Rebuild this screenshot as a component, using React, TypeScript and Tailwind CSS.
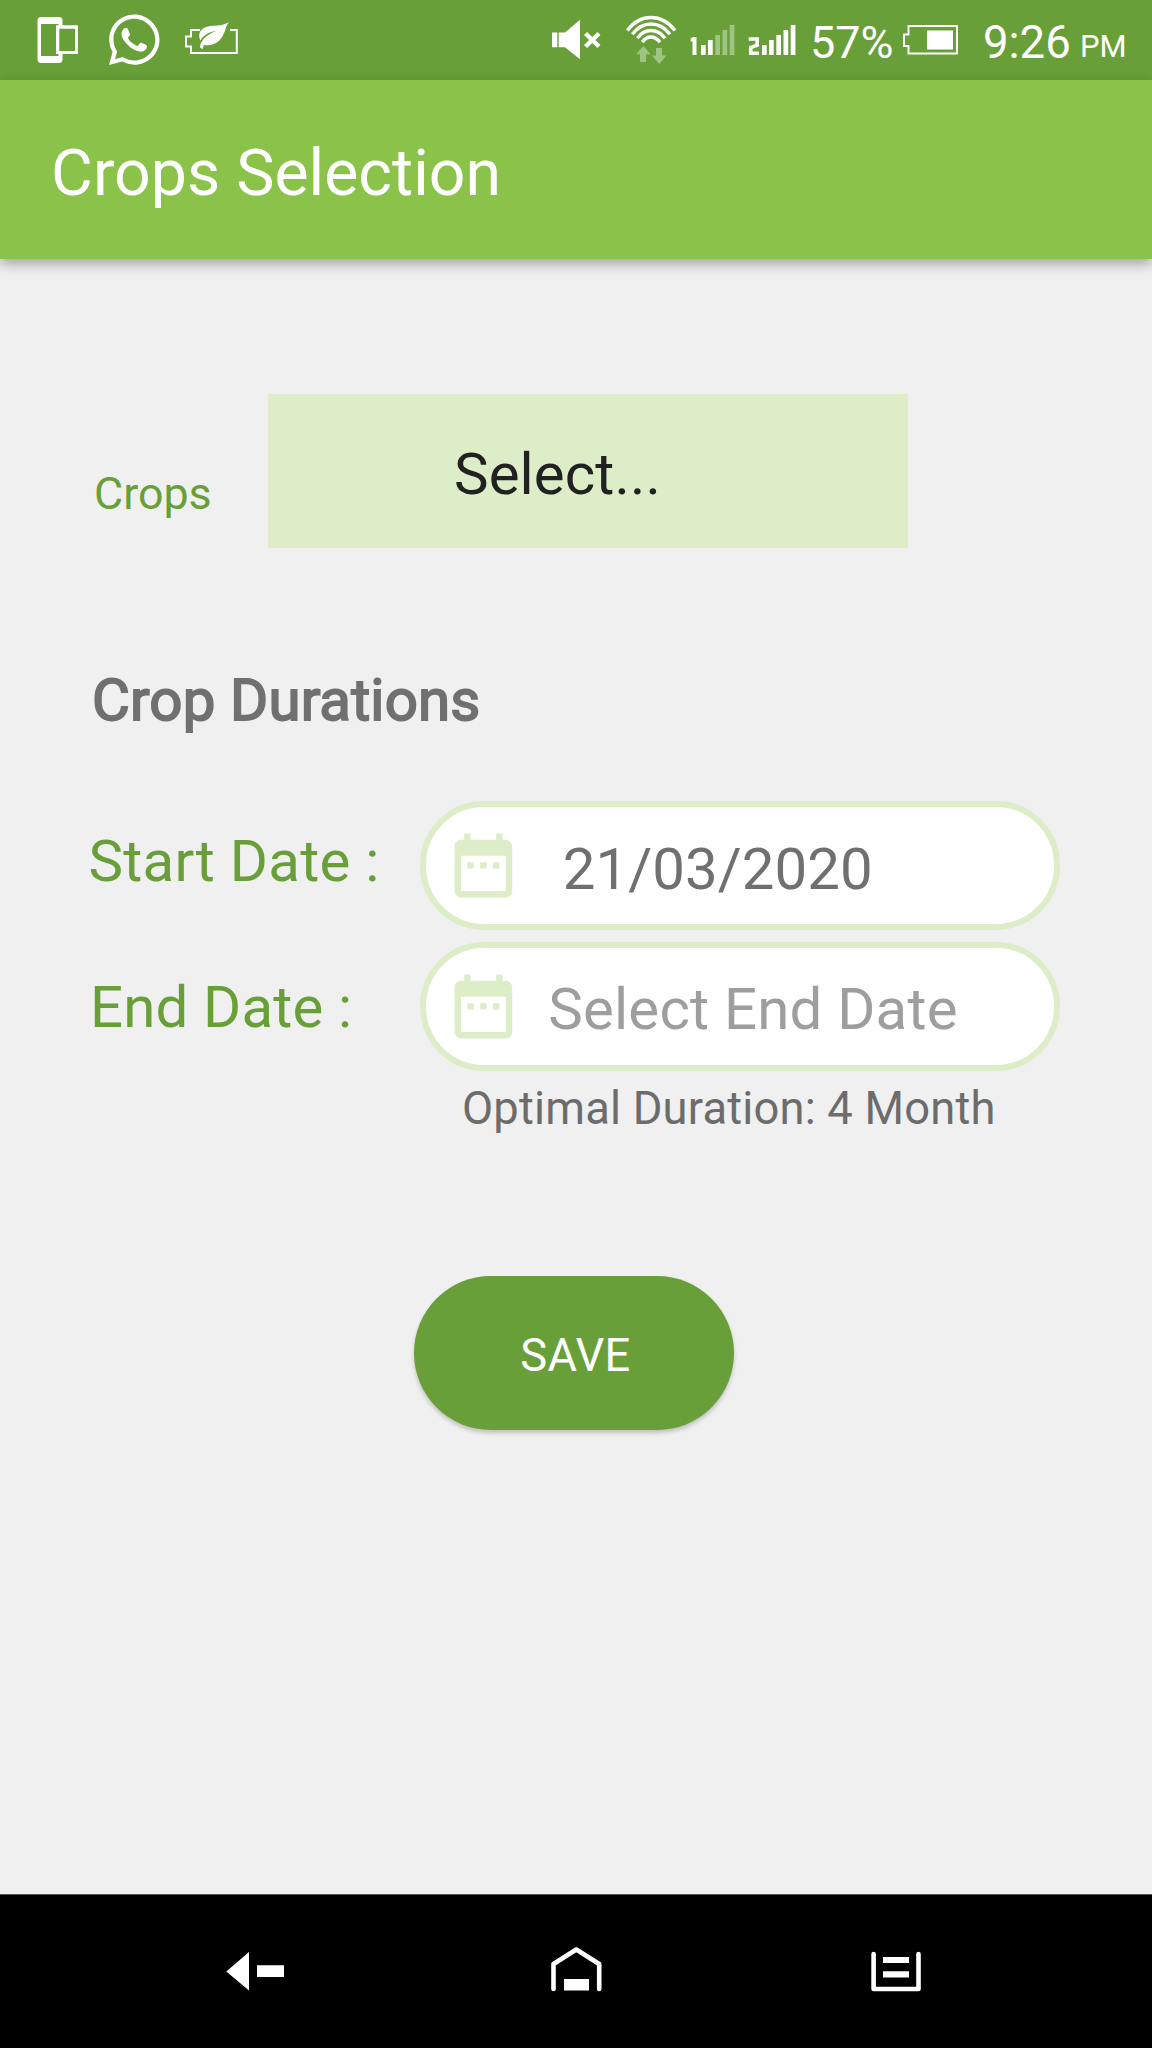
import React from "react";
import { FaWhatsapp } from "react-icons/fa";
import { MdDateRange } from "react-icons/md";

function PhoneIcon() {
  return (
    <svg className="ml-[37px] h-20 w-[42px] shrink-0" viewBox="37 0 42 80">
      <path
        fill="#fff"
        fillRule="evenodd"
        d="M41 17H59Q62.5 17 62.5 20.500V25.300H78V54H62.500V59Q62.500 63 59 63H41Q37.500 63 37.500 59V20.500Q37.500 17 41 17ZM41 24V56H58.500V54H56V25.300H58.500V24ZM59.300 28.700V51H75V28.700Z"
      />
    </svg>
  );
}

function EcoBatteryIcon() {
  return (
    <svg className="ml-[24px] h-20 w-[56px] shrink-0" viewBox="184 0 56 80">
      <path
        fill="none"
        stroke="#fff"
        strokeWidth="2"
        d="M200 30H191V36.500H186V46.500H191V53H236.800V30H230"
      />
      <path
        fill="#fff"
        d="M229 22C225 27 226 31 222 37C218 44 210 46 204 45C203 46.500 202.700 47.500 203 49L200.500 48C199.500 45.500 200.500 43.500 202 41.500C205 36 211 33 217 30.500C209 32 203.500 35 200.500 40.500C198 36 199 30 205 27.500C212 24.500 222 27 229 22Z"
      />
    </svg>
  );
}

function MuteIcon() {
  return (
    <svg className="h-20 w-[50px] shrink-0" viewBox="551 0 50 80">
      <path fill="#fff" d="M552 32.500H557.300V47.300H552ZM558.700 32.500H565L580 19.700V59.300L565 47.300H558.700Z" />
      <path stroke="#fff" strokeWidth="4.400" d="M585.500 33.500L599 46.500M599 33.500L585.500 46.500" />
    </svg>
  );
}

function WifiIcon() {
  return (
    <svg className="ml-[24px] h-20 w-[54px] shrink-0" viewBox="625 0 54 80">
      <g fill="none" stroke="#fff" strokeWidth="3.400">
        <path d="M627.300 30.500Q637 17.500 651 17.500T675 30.500" />
        <path d="M632.300 34.200Q640 24 651 24T670 34.200" />
        <path d="M637.300 38.200Q643 30.500 651 30.500T665 38.200" />
        <path d="M642.300 42.200Q646 37 651 37T660 42.200" />
      </g>
      <path
        fill="#a0c481"
        d="M643.500 46L650.500 54.300H646V62H640V54.300H636ZM656 48H662V55.500H666.500L659.300 64L652 55.500H656Z"
      />
    </svg>
  );
}

const signalBars = [
  [701, 45, 10],
  [708, 40, 15],
  [715.3, 35, 20],
  [722.5, 30, 25],
  [729.7, 25, 30],
];

function SignalOneIcon() {
  return (
    <svg className="ml-[11px] h-20 w-[45px] shrink-0" viewBox="690 0 45 80">
      <path fill="#fff" d="M690.700 38.300L693.300 37H696.500V55H692.500V41.500H690.700Z" />
      {signalBars.map(([x, y, h], i) => (
        <rect key={x} x={x} y={y} width="4.700" height={h} fill={i < 2 ? "#fff" : "#a0c481"} />
      ))}
    </svg>
  );
}

function SignalTwoIcon() {
  return (
    <svg className="ml-[13px] h-20 w-[48px] shrink-0" viewBox="748 0 48 80">
      <path fill="none" stroke="#fff" strokeWidth="3.600" d="M748.700 39H757.200V45.300L750.700 47.500V53.200H759" />
      {signalBars.map(([x, y, h]) => (
        <rect key={x} x={x + 61} y={y} width="4.700" height={h} fill="#fff" />
      ))}
    </svg>
  );
}

function BatteryIcon() {
  return (
    <svg className="h-20 w-[56px] shrink-0" viewBox="902 0 56 80">
      <path
        fill="none"
        stroke="#fff"
        strokeWidth="1.900"
        d="M908.500 26H957V53.500H908.500V46H904V34.500H908.500Z"
      />
      <rect x="927" y="30.500" width="26" height="19" fill="#fff" />
    </svg>
  );
}

function StatusBar() {
  return (
    <header className="flex h-20 items-center bg-[#689f38] text-white">
      <PhoneIcon />
      <FaWhatsapp className="ml-[30px] h-[57.700px] w-[50.500px] shrink-0" />
      <EcoBatteryIcon />
      <div className="ml-auto flex items-center">
        <MuteIcon />
        <WifiIcon />
        <SignalOneIcon />
        <SignalTwoIcon />
        <span className="ml-[14px] w-[92px] pt-[5px] text-[45px] leading-[80px] whitespace-nowrap">57%</span>
        <BatteryIcon />
        <span className="ml-[25px] w-[97px] pt-[5px] text-[45.500px] leading-[80px] whitespace-nowrap">9:26</span>
        <span className="w-[72px] pt-[14px] text-[31px] leading-[80px] whitespace-nowrap">PM</span>
      </div>
    </header>
  );
}

function DateField({ className, children }: { className: string; children: React.ReactNode }) {
  return (
    <div className="flex h-[129px] w-[640px] items-start rounded-[64px] border-[6px] border-[#dcedc8] bg-white">
      <MdDateRange className="mt-[19.500px] ml-[19.400px] h-[76.800px] w-[76.800px] shrink-0 text-[#dcedc8]" />
      <span className={className}>{children}</span>
    </div>
  );
}

function NavBar() {
  return (
    <nav className="flex h-[154px] border-t border-[#555] bg-black">
      <svg className="ml-[226px] h-[153px] w-[60px]" viewBox="226 1895 60 153">
        <path fill="#fff" d="M226.300 1971.500L249 1952V1990.500ZM257 1965.300H284V1977H257Z" />
      </svg>
      <svg className="ml-[264px] h-[153px] w-[52px]" viewBox="550 1895 52 153">
        <path
          fill="none"
          stroke="#fff"
          strokeWidth="4.600"
          strokeLinecap="round"
          strokeLinejoin="round"
          d="M553.500 1989V1964L576.300 1949.500L599.200 1964V1989"
        />
        <rect x="564" y="1979" width="25" height="11.500" fill="#fff" />
      </svg>
      <svg className="ml-[268px] h-[153px] w-[54px]" viewBox="870 1895 54 153">
        <path
          fill="none"
          stroke="#fff"
          strokeWidth="4.600"
          strokeLinecap="round"
          strokeLinejoin="round"
          d="M873.600 1954V1989H918.500V1954"
        />
        <path fill="#fff" d="M883 1957H909V1963H883ZM883 1971.300H909V1977.500H883Z" />
      </svg>
    </nav>
  );
}

export default function App() {
  return (
    <div className="flex h-[2048px] w-[1152px] flex-col overflow-hidden bg-[#f0f0f0] font-[Roboto,sans-serif]">
      <StatusBar />
      <div className="h-[179px] bg-[#8bc34a] pt-[55px] pl-[51px] text-[64.400px] leading-[76px] text-white shadow-[0_5px_12px_rgba(0,0,0,0.32)]">
        <h1>Crops Selection</h1>
      </div>
      <main className="flex-1">
        <div className="mt-[135px] flex h-[154px] items-start">
          <label className="w-[268px] pt-[74.400px] pl-[94px] text-[44.800px] leading-[52px] text-[#689f38]">Crops</label>
          <button className="h-[154px] w-[640px] bg-[#dcedc8] pb-[40px] pl-[186px] text-left text-[58.200px] leading-[68px] tracking-[0.1px] text-[#212121]">
            <span className="block pt-[45.600px]">Select...</span>
          </button>
        </div>
        <h2 className="mt-[118.300px] pl-[92px] text-[58.200px] leading-[68px] font-normal tracking-[0.15px] text-[#707070] [-webkit-text-stroke:1.8px_#707070]">Crop Durations</h2>
        <div className="mt-[67.200px] flex items-start text-[58.200px] leading-[68px]">
          <label className="w-[420px] pt-[26px] pl-[88.500px] tracking-[0.25px] text-[#689f38]">Start Date :</label>
          <DateField className="mt-[27.500px] ml-[40.500px] whitespace-nowrap tracking-[0.05px] text-[#707070]">21/03/2020</DateField>
        </div>
        <div className="mt-3 flex items-start text-[58.200px] leading-[68px]">
          <label className="w-[420px] pt-[31px] pl-[90px] tracking-[0.15px] text-[#689f38]">End Date :</label>
          <DateField className="mt-[26.300px] ml-[26px] whitespace-nowrap tracking-[0.2px] text-[#9e9e9e]">Select End Date</DateField>
        </div>
        <p className="mt-[11.800px] pl-[462px] text-[45.300px] leading-[52px] tracking-[0.2px] text-[#6c6c6c]">Optimal Duration: 4 Month</p>
        <button className="mt-[140.500px] ml-[414px] block h-[154px] w-[320px] rounded-full bg-[#689f38] pb-[48px] pl-[3px] text-center text-[45.300px] leading-[52px] tracking-[0.3px] text-white shadow-[0_3px_4px_rgba(0,0,0,0.2)]">
          <span className="block pt-[54px]">SAVE</span>
        </button>
      </main>
      <NavBar />
    </div>
  );
}
